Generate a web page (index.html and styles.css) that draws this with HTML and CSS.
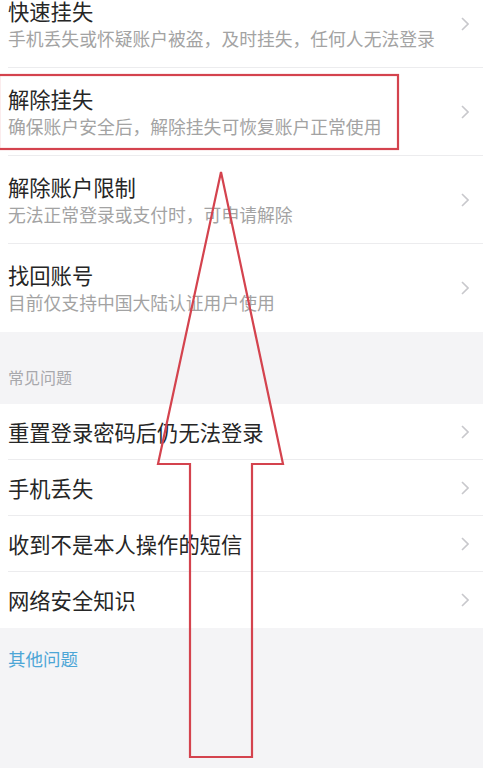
FILE: index.html
```html
<!DOCTYPE html>
<html lang="zh-CN">
<head>
<meta charset="utf-8">
<title>账户安全</title>
<link rel="stylesheet" href="styles.css">
</head>
<body>
<div class="page">
  <ul class="list list-main">
    <li class="item item-2">
      <div class="texts"><div class="title">快速挂失</div><div class="sub">手机丢失或怀疑账户被盗，及时挂失，任何人无法登录</div></div>
      <svg class="chev" viewBox="0 0 8 14"><path d="M1 1l6 6-6 6"/></svg>
    </li>
    <li class="item item-2">
      <div class="texts"><div class="title">解除挂失</div><div class="sub">确保账户安全后，解除挂失可恢复账户正常使用</div></div>
      <svg class="chev" viewBox="0 0 8 14"><path d="M1 1l6 6-6 6"/></svg>
    </li>
    <li class="item item-2">
      <div class="texts"><div class="title">解除账户限制</div><div class="sub">无法正常登录或支付时，可申请解除</div></div>
      <svg class="chev" viewBox="0 0 8 14"><path d="M1 1l6 6-6 6"/></svg>
    </li>
    <li class="item item-2 last">
      <div class="texts"><div class="title">找回账号</div><div class="sub">目前仅支持中国大陆认证用户使用</div></div>
      <svg class="chev" viewBox="0 0 8 14"><path d="M1 1l6 6-6 6"/></svg>
    </li>
  </ul>
  <div class="section-head">常见问题</div>
  <ul class="list">
    <li class="item item-1"><div class="title">重置登录密码后仍无法登录</div><svg class="chev" viewBox="0 0 8 14"><path d="M1 1l6 6-6 6"/></svg></li>
    <li class="item item-1"><div class="title">手机丢失</div><svg class="chev" viewBox="0 0 8 14"><path d="M1 1l6 6-6 6"/></svg></li>
    <li class="item item-1"><div class="title">收到不是本人操作的短信</div><svg class="chev" viewBox="0 0 8 14"><path d="M1 1l6 6-6 6"/></svg></li>
    <li class="item item-1 last"><div class="title">网络安全知识</div><svg class="chev" viewBox="0 0 8 14"><path d="M1 1l6 6-6 6"/></svg></li>
  </ul>
  <div class="more">其他问题</div>

  <svg class="annot" viewBox="0 0 483 768" width="483" height="768">
    <rect x="-1" y="75" width="399" height="74" />
    <polygon points="221,172 283,464 252,464 252,757 190,757 190,464 158,464" />
  </svg>
</div>
</body>
</html>
```
FILE: styles.css
```css
* { box-sizing: border-box; }
html, body {
  margin: 0;
  padding: 0;
  background: #f4f4f6;
}
body {
  font-family: "Noto Sans CJK SC", "Noto Sans", sans-serif;
  width: 483px;
  height: 768px;
  overflow: hidden;
}
.page {
  position: relative;
  width: 483px;
  height: 768px;
  overflow: hidden;
}
.list {
  list-style: none;
  margin: 0;
  padding: 0;
  background: #fff;
}
.list-main {
  margin-top: -20px;
}
.item {
  display: flex;
  align-items: center;
  justify-content: space-between;
  margin-left: 8px;
  padding-right: 14px;
  border-bottom: 1px solid #ececee;
}
.item.last { border-bottom: none; }
.item-2 { height: 88px; }
.item-1 { height: 56px; }
.texts {
  display: flex;
  flex-direction: column;
  padding-top: 1px;
}
.title {
  font-size: 21.3px;
  line-height: 28px;
  color: #262626;
  white-space: nowrap;
}
.sub {
  font-size: 17.8px;
  line-height: 27px;
  color: #a3a3a3;
  white-space: nowrap;
}
.chev {
  width: 8px;
  height: 14px;
  flex: none;
}
.chev path {
  fill: none;
  stroke: #c8c8cc;
  stroke-width: 1.6;
}
.section-head {
  height: 72px;
  padding: 34px 8px 0;
  font-size: 16px;
  line-height: 22px;
  color: #a8a8ac;
}
.more {
  padding: 19px 8px 0;
  font-size: 17.5px;
  line-height: 24px;
  color: #4da6d6;
}
.annot {
  position: absolute;
  left: 0;
  top: 0;
  pointer-events: none;
}
.annot rect, .annot polygon {
  fill: none;
  stroke: #d4434e;
  stroke-width: 2.2;
}
```
